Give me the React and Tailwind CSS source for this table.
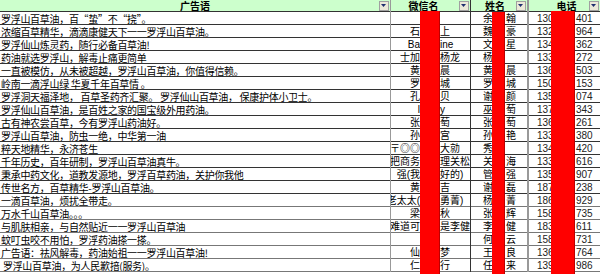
import React from "react";

const rows = [
  { a: "罗浮山百草油，百“蛰”不“挠”。", b: ["", ""], c: ["余", "翰"], d: ["130", "401"] },
  { a: "浓缩百草精华，滴滴康健天下一一罗浮山百草油。", b: ["石", "上"], c: ["魏", "豪"], d: ["132", "964"] },
  { a: "罗浮仙山炼灵药，随行必备百草油!", b: ["Ba", "ine"], c: ["文", "星"], d: ["134", "362"] },
  { a: "药油就选罗浮山，解毒止痛更简单", b: ["士加", "杨龙"], c: ["杨", ""], d: ["133", "272"] },
  { a: "一直被模仿，从未被超越，罗浮山百草油，你值得信赖。", b: ["黄", "晨"], c: ["黄", "晨"], d: ["136", "503"] },
  { a: "岭南一滴浮山绿 华夏千年百草情 。", b: ["罗", "城"], c: ["罗", "城"], d: ["150", "153"] },
  { a: "罗浮洞天福泽地， 百草圣药齐汇聚。 罗浮仙山百草油， 保康护体小卫士。", b: ["孔", "贝"], c: ["谢", "颜"], d: ["135", "074"] },
  { a: "罗浮仙山百草油，是百姓之家的国宝级外用药油。", b: ["l", "y"], c: ["巫", "萄"], d: ["137", "343"] },
  { a: "古有神农尝百草，今有罗浮山药油好。", b: ["张", "萄"], c: ["张", "萄"], d: ["136", "261"] },
  { a: "罗浮山百草油，防虫一绝，中华第一油", b: ["孙", "宫"], c: ["孙", "艳"], d: ["133", "380"] },
  { a: "粹天地精华，永济苍生", b: ["〒◎◎", "大勍"], c: ["秀", ""], d: ["134", "420"] },
  { a: "千年历史，百年研制，罗浮山百草油真牛。", b: ["请把商务", "理关松涛"], c: ["关", "海"], d: ["133", "616"] },
  { a: "秉承中药文化，道教发源地，罗浮百草药油，关护你我他", b: ["强(我", "好的)"], c: ["管", "强"], d: ["135", "907"] },
  { a: "传世名方，百草精华-罗浮山百草油。", b: ["黄", "吉"], c: ["谢", "磊"], d: ["187", "238"] },
  { a: "一滴百草油，烦扰全带走。", b: ["老太太(", "勇菁)"], c: ["杨", "菁"], d: ["186", "929"] },
  { a: "万水千山百草油。。。", b: ["梁", "秋"], c: ["张", "辉"], d: ["158", "735"] },
  { a: "与肌肤相亲，与自然贴近一一罗浮山百草油", b: ["难道可", "是李健"], c: ["李", "健"], d: ["183", "611"] },
  { a: "蚊叮虫咬不用怕，罗浮药油搽一搽。", b: ["", ""], c: ["何", "云"], d: ["158", "731"] },
  { a: "广告语：祛风解毒，药油始祖一一罗浮山百草油!", b: ["仙", "梦"], c: ["王", "良"], d: ["136", "764"] },
  { a: " 罗浮山百草油，为人民歉揞(服务)。", b: ["仁", "行"], c: ["任", "来"], d: ["139", "986"] },
];

const font = { fontFamily: '"Liberation Sans", "Noto Sans CJK SC", sans-serif' };
const cjk = { fontFamily: '"Noto Sans CJK SC", "Liberation Sans", sans-serif' };

function Drop() {
  return (
    <div className="absolute right-[1px] top-[1px] w-[10px] h-[10px] bg-[#ece9d8] border border-[#a0a0a0] flex items-center justify-center">
      <svg width="6" height="4" viewBox="0 0 6 4">
        <path d="M0 0 H5 L2.5 3 Z" fill="#1f2f6f" />
      </svg>
    </div>
  );
}

export default function App() {
  return (
    <div lang="zh-CN" className="relative w-[600px] h-[274px] overflow-hidden bg-white text-black text-[10px] leading-[11px]" style={font}>
      <div className="grid grid-cols-[390px_1px_79px_1px_56px_2px_71px]">
        <div className="relative h-[12px] bg-[#ccffcc] border-b border-[#333] flex items-center justify-center font-bold" style={cjk}>
          <span>广告语</span><Drop />
        </div>
        <div className="bg-[#999]" />
        <div className="relative h-[12px] bg-[#ccffcc] border-b border-[#333] flex items-center justify-center font-bold pr-[14px]" style={cjk}>
          <span>微信名</span><Drop />
        </div>
        <div className="bg-[#333]" />
        <div className="relative h-[12px] bg-[#ccffcc] border-b border-[#333] flex items-center justify-center font-bold pr-[8px]" style={cjk}>
          <span>姓名</span><Drop />
        </div>
        <div className="bg-[#999]" />
        <div className="relative h-[12px] bg-[#ccffcc] border-b border-[#333] flex items-center justify-center font-bold pl-[4px]" style={cjk}>
          <span>电话</span><Drop />
        </div>
        {rows.map((r, i) => (
          <React.Fragment key={i}>
            <div className={"h-[13px] border-b flex items-center pl-[1px] whitespace-pre overflow-hidden tracking-[-0.3px] " + (i < 14 ? "border-[#333]" : "border-[#777]")} style={cjk}>{r.a}</div>
            <div className="bg-[#999]" />
            <div className={"h-[13px] border-b grid grid-cols-[29px_20px_30px] items-center overflow-hidden whitespace-nowrap " + (i < 14 ? "border-[#333]" : "border-[#777]")}>
              <div className="flex justify-end">{r.b[0]}</div>
              <div />
              <div className="flex justify-start">{r.b[1]}</div>
            </div>
            <div className="bg-[#333]" />
            <div className={"h-[13px] border-b grid grid-cols-[22px_13px_21px] items-center overflow-hidden whitespace-nowrap " + (i < 14 ? "border-[#333]" : "border-[#777]")}>
              <div className="flex justify-end">{r.c[0]}</div>
              <div />
              <div className="flex justify-start">{r.c[1]}</div>
            </div>
            <div className="bg-[#999]" />
            <div className={"h-[13px] border-b flex items-center whitespace-nowrap text-[#222] " + (i < 14 ? "border-[#333]" : "border-[#777]")}>
              <span className="pl-[8px] w-[47px]">{r.d[0]}</span>
              <span>{r.d[1]}</span>
            </div>
          </React.Fragment>
        ))}
      </div>
      <div className="absolute left-[420px] top-[11px] w-[20px] h-[263px] bg-[#ff0000] border-r border-[#b00]" />
      <div className="absolute left-[492px] top-[12px] w-[13px] h-[262px] bg-[#ff0000] border-r border-[#b00]" />
      <div className="absolute left-[551px] top-[11px] w-[24px] h-[263px] bg-[#ff0000] border-r border-[#b00]" />
    </div>
  );
}
